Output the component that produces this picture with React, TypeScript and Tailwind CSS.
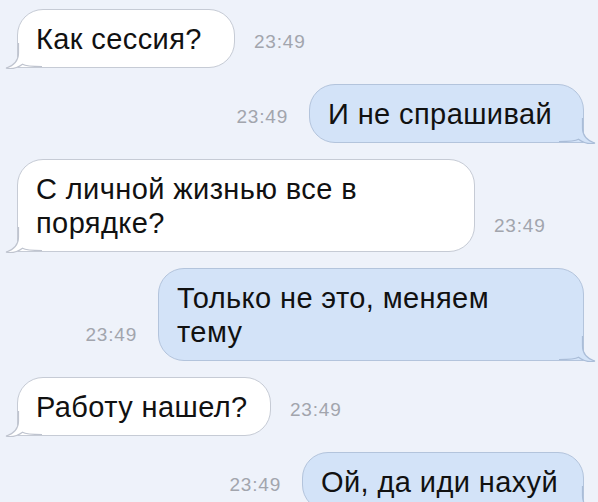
import React from "react";

type Side = "in" | "out";

type Message = {
  side: Side;
  lines: string[];
  width: string;
  time: string;
};

const messages: Message[] = [
  { side: "in", lines: ["Как сессия?"], width: "w-[218px]", time: "23:49" },
  { side: "out", lines: ["И не спрашивай"], width: "w-[275px]", time: "23:49" },
  { side: "in", lines: ["С личной жизнью все в", "порядке?"], width: "w-[458px]", time: "23:49" },
  { side: "out", lines: ["Только не это, меняем", "тему"], width: "w-[426px]", time: "23:49" },
  { side: "in", lines: ["Работу нашел?"], width: "w-[254px]", time: "23:49" },
  { side: "out", lines: ["Ой, да иди нахуй"], width: "w-[282px]", time: "23:49" },
];

// Curled tail drawn over the bubble's square corner, origin at that corner
function Tail({ side }: { side: Side }) {
  const fill = side === "in" ? "#ffffff" : "#d3e3f8";
  const stroke = side === "in" ? "#bfc4cf" : "#aabdd8";
  const edge = "M0.5,-24 L0.5,-14 C0.5,-6 -4,-1.5 -12,1.2 C-5.5,2.2 0,0.6 4.5,-2.8 C8,-0.7 13,-0.5 24,-0.5";
  return (
    <svg
      viewBox="-14 -24 40 28"
      width="40"
      height="28"
      className={`pointer-events-none absolute bottom-[-4px] ${side === "in" ? "left-[-14px]" : "right-[-14px] -scale-x-100"}`}
    >
      {/* cover only the border strip along the corner, keep clear of the text */}
      <path d={`${edge} L24,-4 L2.5,-4 L2.5,-24 Z`} fill={fill} />
      <path d={edge} fill="none" stroke={stroke} strokeWidth="1.2" />
    </svg>
  );
}

function Time({ value }: { value: string }) {
  return (
    <span className="pb-[16px] text-[19px] leading-[20px] tracking-[0.8px] text-[#a2a5ad]">{value}</span>
  );
}

function Bubble({ m }: { m: Message }) {
  const look =
    m.side === "in"
      ? "bg-white border-[#c6cbd5] rounded-bl-none"
      : "bg-[#d3e3f8] border-[#b3c4dc] rounded-br-none";
  return (
    <div
      className={`relative ${m.width} rounded-[26px] border pl-[18px] pr-4 pt-[12px] pb-[11px] text-[29px] leading-[34px] tracking-[0.4px] text-[#111] ${look}`}
    >
      <Tail side={m.side} />
      {m.lines.map((l, i) => (
        <div key={i} className="relative whitespace-nowrap">
          {l}
        </div>
      ))}
    </div>
  );
}

export default function App() {
  return (
    <div
      className="h-[502px] w-[598px] overflow-hidden bg-[#eef2fa] pt-[9px]"
      style={{ fontFamily: '"Liberation Sans", Arial, sans-serif' }}
    >
      <div className="flex flex-col gap-4">
        {messages.map((m, i) =>
          m.side === "in" ? (
            <div key={i} className="flex items-end gap-[19px] pl-[17px]">
              <Bubble m={m} />
              <Time value={m.time} />
            </div>
          ) : (
            <div key={i} className="flex items-end justify-end gap-[21px] pr-[14px]">
              <Time value={m.time} />
              <Bubble m={m} />
            </div>
          )
        )}
      </div>
    </div>
  );
}
